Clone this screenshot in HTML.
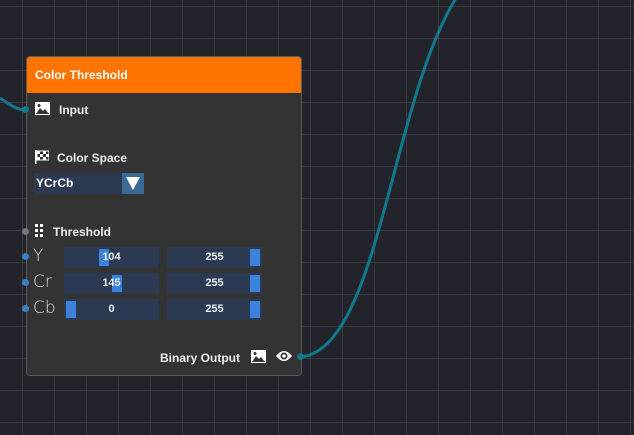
<html><head><style>
body{margin:0;width:634px;height:435px;overflow:hidden;background:#23232b;font-family:"Liberation Sans",sans-serif;}
.grid{position:absolute;inset:0;background-image:linear-gradient(to right,#3a3a41 1px,transparent 1px),linear-gradient(to bottom,#3a3a41 1px,transparent 1px);background-size:32px 32px;background-position:22px 6px;}
.node{position:absolute;left:26px;top:56px;width:274px;height:318px;background:#333;border:1px solid #5a5a5a;border-radius:4px;overflow:hidden}
.hd{height:36px;background:#ff7300;color:#fff;font-size:12px;font-weight:bold;line-height:36px;padding-left:8px}
.t{position:absolute;color:#eee;font-size:12px;font-weight:bold}
.dot{position:absolute;width:7px;height:7px;border-radius:50%}
.f{position:absolute;height:21px;background:#2b3a52;color:#eee;font-size:11px;font-weight:bold;text-align:center;line-height:21px}
.b{position:absolute;top:2px;height:17px;width:10px;background:#3b82dc}
.l{position:absolute;color:#ddd;font-size:17px;font-family:"DejaVu Sans",sans-serif;font-weight:200}
</style></head><body>
<div class="grid"></div>
<svg width="634" height="435" style="position:absolute;left:0;top:0">
<path d="M0 98 C 10 104, 15 110, 27 110" stroke="#0f7a8c" stroke-width="3" fill="none"/>
<path d="M300 357 C 380 350, 390 100, 458 -5" stroke="#0f7a8c" stroke-width="3" fill="none"/>
</svg>
<div class="node">
<div class="hd">Color Threshold</div>
<svg style="position:absolute;left:8px;top:45px" width="15" height="13"><rect width="15" height="13" fill="#fff"/><path d="M1 12 L5 6 L8 9 L10 7 L14 12Z" fill="#333"/><circle cx="4" cy="3.5" r="1.5" fill="#333"/></svg>
<div class="t" style="left:32px;top:46px">Input</div>
<svg style="position:absolute;left:8px;top:93px" width="14" height="14"><rect x="0" y="0" width="1.5" height="14" fill="#fff"/><g fill="#fff"><rect x="2" y="1" width="3" height="3"/><rect x="8" y="1" width="3" height="3"/><rect x="5" y="4" width="3" height="3"/><rect x="11" y="4" width="3" height="3"/><rect x="2" y="7" width="3" height="3"/><rect x="8" y="7" width="3" height="3"/></g><rect x="2" y="1" width="12" height="9" fill="none" stroke="#fff"/></svg>
<div class="t" style="left:30px;top:94px">Color Space</div>
<div style="position:absolute;left:7px;top:116px;width:110px;height:21px;background:#2b3a52;color:#fff;font-size:12px;font-weight:bold;line-height:21px;padding-left:2px;box-sizing:border-box">YCrCb
<div style="position:absolute;right:0;top:0;width:22px;height:21px;background:#3a6a96"><div style="position:absolute;left:4px;top:4px;border-left:7px solid transparent;border-right:7px solid transparent;border-top:13px solid #fff"></div></div></div>
<svg style="position:absolute;left:8px;top:167px" width="8" height="14" fill="#fff"><rect x="0" y="0" width="3" height="3"/><rect x="5" y="0" width="3" height="3"/><rect x="0" y="5" width="3" height="3"/><rect x="5" y="5" width="3" height="3"/><rect x="0" y="10" width="3" height="3"/><rect x="5" y="10" width="3" height="3"/></svg>
<div class="t" style="left:26px;top:168px">Threshold</div>
<div class="l" style="left:6px;top:189px">Y</div>
<div class="l" style="left:6px;top:215px">Cr</div>
<div class="l" style="left:6px;top:241px">Cb</div>
<div class="f" style="left:37px;top:190px;width:95px"><div class="b" style="left:35px"></div><span style="position:relative">104</span></div>
<div class="f" style="left:140px;top:190px;width:95px"><div class="b" style="left:83px"></div><span style="position:relative">255</span></div>
<div class="f" style="left:37px;top:216px;width:95px"><div class="b" style="left:48px"></div><span style="position:relative">145</span></div>
<div class="f" style="left:140px;top:216px;width:95px"><div class="b" style="left:83px"></div><span style="position:relative">255</span></div>
<div class="f" style="left:37px;top:242px;width:95px"><div class="b" style="left:2px"></div><span style="position:relative">0</span></div>
<div class="f" style="left:140px;top:242px;width:95px"><div class="b" style="left:83px"></div><span style="position:relative">255</span></div>
<div class="t" style="left:133px;top:294px">Binary Output</div>
<svg style="position:absolute;left:224px;top:293px" width="15" height="13"><rect width="15" height="13" fill="#fff"/><path d="M1 12 L5 6 L8 9 L10 7 L14 12Z" fill="#333"/><circle cx="4" cy="3.5" r="1.5" fill="#333"/></svg>
<svg style="position:absolute;left:248px;top:292px" width="18" height="14"><path d="M1 7 Q9 -3 17 7 Q9 17 1 7Z" fill="#fff"/><circle cx="9" cy="7" r="3.5" fill="#333"/><circle cx="9" cy="7" r="1.8" fill="#fff"/></svg>
</div>
<div class="dot" style="left:22px;top:106px;background:#0f7a8c"></div>
<div class="dot" style="left:22px;top:228px;background:#707880"></div>
<div class="dot" style="left:22px;top:253px;background:#3a80c8"></div>
<div class="dot" style="left:22px;top:279px;background:#3a80c8"></div>
<div class="dot" style="left:22px;top:305px;background:#3a80c8"></div>
<div class="dot" style="left:297px;top:353px;background:#0f7a8c"></div>
</body></html>
